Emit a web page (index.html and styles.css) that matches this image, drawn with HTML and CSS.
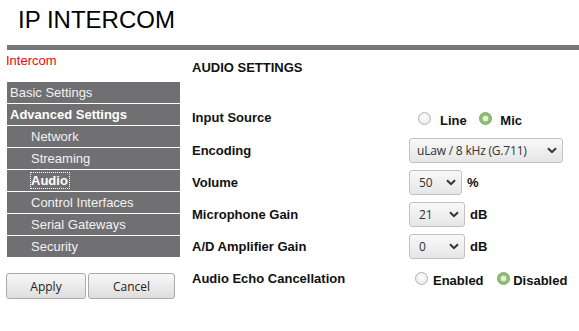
FILE: index.html
```html
<!DOCTYPE html>
<html lang="en">

<head>
  <meta charset="UTF-8">
  <title>IP INTERCOM</title>
  <link rel="stylesheet" href="styles.css">
</head>

<body>
  <h1 class="title">IP INTERCOM</h1>
  <div class="bar"></div>

  <div class="main">
    <!-- left menu -->
    <div class="side">
      <div class="device">Intercom</div>
      <ul class="menu">
        <li>Basic Settings</li>
        <li class="bold">Advanced Settings</li>
        <li class="sub">Network</li>
        <li class="sub">Streaming</li>
        <li class="sub bold"><span class="focus">Audio</span></li>
        <li class="sub">Control Interfaces</li>
        <li class="sub">Serial Gateways</li>
        <li class="sub">Security</li>
      </ul>
      <div class="actions">
        <button class="btn apply">Apply</button>
        <button class="btn cancel">Cancel</button>
      </div>
    </div>

    <!-- settings form -->
    <div class="content">
      <h2 class="heading">AUDIO SETTINGS</h2>
      <div class="form">
        <div class="label">Input Source</div>
        <div class="radios line-row">
          <input type="radio" name="src" class="radio"><span class="opt">Line</span>
          <input type="radio" name="src" class="radio" checked><span class="opt">Mic</span>
        </div>

        <div class="label">Encoding</div>
        <div class="field">
          <span class="sel">
            <select class="enc"><option>uLaw / 8 kHz (G.711)</option></select>
            <svg class="chev" width="10" height="7" viewBox="0 0 10 7"><polyline points="1,1.2 5,5.2 9,1.2" fill="none" stroke="#333" stroke-width="2"/></svg>
          </span>
        </div>

        <div class="label">Volume</div>
        <div class="field">
          <span class="sel">
            <select class="vol"><option>50</option></select>
            <svg class="chev" width="10" height="7" viewBox="0 0 10 7"><polyline points="1,1.2 5,5.2 9,1.2" fill="none" stroke="#333" stroke-width="2"/></svg>
          </span>
          <span class="unit">%</span>
        </div>

        <div class="label">Microphone Gain</div>
        <div class="field">
          <span class="sel">
            <select class="gain"><option>21</option></select>
            <svg class="chev" width="10" height="7" viewBox="0 0 10 7"><polyline points="1,1.2 5,5.2 9,1.2" fill="none" stroke="#333" stroke-width="2"/></svg>
          </span>
          <span class="unit">dB</span>
        </div>

        <div class="label">A/D Amplifier Gain</div>
        <div class="field">
          <span class="sel">
            <select class="gain"><option>0</option></select>
            <svg class="chev" width="10" height="7" viewBox="0 0 10 7"><polyline points="1,1.2 5,5.2 9,1.2" fill="none" stroke="#333" stroke-width="2"/></svg>
          </span>
          <span class="unit">dB</span>
        </div>

        <div class="label">Audio Echo Cancellation</div>
        <div class="radios echo-row">
          <input type="radio" name="aec" class="radio"><span class="opt">Enabled</span>
          <input type="radio" name="aec" class="radio" checked><span class="opt">Disabled</span>
        </div>
      </div>
    </div>
  </div>
</body>

</html>
```

FILE: styles.css
```css
body {
  margin: 0;
  font-family: "Liberation Sans", Arial, sans-serif;
  color: #111;
  background: #fff;
}

.title {
  margin: 0;
  padding: 6px 18px 0;
  font-size: 24px;
  font-weight: normal;
  line-height: 28px;
  color: #000;
}

.bar {
  height: 5px;
  margin: 11px 0 0 7px;
  background: #77777b;
}

.main {
  display: flex;
}

.side {
  width: 174px;
  padding: 3px 0 0 6px;
}

.device {
  font-size: 13px;
  line-height: 15px;
  color: #ff0000;
}

.menu {
  list-style: none;
  margin: 14px 0 0 1px;
  padding: 0;
}

.menu li {
  height: 21px;
  line-height: 21px;
  padding-left: 3px;
  font-size: 13px;
  color: #f2f2f2;
  background: #707073;
  border-bottom: 1px solid #fff;
}

.menu li:last-child {
  border-bottom: none;
}

.menu li.sub {
  padding-left: 24px;
}

.menu li.bold {
  font-weight: bold;
  color: #fff;
}

.focus {
  outline: 1px dotted #fff;
  line-height: 15px;
  display: inline-block;
  padding: 0 1px 0 0;
}

.actions {
  display: flex;
  gap: 2px;
  margin-top: 16px;
}

.btn {
  height: 26px;
  padding: 0;
  font-family: "Open Sans", sans-serif;
  font-size: 12px;
  color: #222;
  background: linear-gradient(#f7f7f7, #dedede);
  border: 1px solid #aaa;
  border-radius: 3px;
}

.apply {
  width: 80px;
}

.cancel {
  width: 87px;
}

.content {
  margin-left: 12px;
  padding-top: 10px;
  flex: 1;
}

.heading {
  margin: 0;
  font-size: 13px;
  line-height: 15px;
  font-weight: bold;
  color: #111;
}

.form {
  display: grid;
  grid-template-columns: 217px auto;
  grid-template-rows: 33px;
  grid-auto-rows: 32px;
  align-items: center;
  margin-top: 26px;
}

.label {
  font-size: 13px;
  font-weight: bold;
  line-height: 15px;
}

.radios {
  font-size: 13px;
  font-weight: bold;
  line-height: 15px;
  padding-top: 4px;
}

.radio {
  -webkit-appearance: none;
  appearance: none;
  width: 13px;
  height: 13px;
  margin: 0;
  border: 1px solid #b4b4b4;
  border-radius: 50%;
  background: radial-gradient(circle at 50% 40%, #ffffff, #e2e2e2);
  box-sizing: border-box;
  vertical-align: baseline;
}

.radio:checked {
  border-color: #7ea565;
  background: radial-gradient(circle, #ebebeb 0 2.6px, #8fbf70 3.2px);
}

.line-row {
  padding-left: 9px;
}

.line-row .opt {
  margin: 0 9px 0 9px;
}

.line-row .opt:last-child {
  margin: 0 0 0 8px;
}

.echo-row {
  padding-left: 6px;
}

.echo-row .opt {
  margin: 0 10px 0 5px;
}

.echo-row .opt:last-child {
  margin: 0 0 0 3px;
}

.field {
  display: flex;
  align-items: center;
}

.sel {
  position: relative;
  display: inline-flex;
}

.sel select {
  -webkit-appearance: none;
  appearance: none;
  height: 25px;
  margin: 0;
  padding: 0 0 0 9px;
  font-family: "Open Sans", sans-serif;
  font-size: 12px;
  letter-spacing: -0.2px;
  color: #333;
  background: linear-gradient(#f8f8f8, #e6e6e6);
  border: 1px solid #c2c2c2;
  border-radius: 3px;
}

.chev {
  position: absolute;
  right: 6px;
  top: 9px;
}

.enc {
  width: 154px;
  padding-left: 7px !important;
}

.vol {
  width: 53px;
}

.gain {
  width: 56px;
}

.unit {
  margin-left: 5px;
  font-size: 13px;
  font-weight: bold;
}
```
